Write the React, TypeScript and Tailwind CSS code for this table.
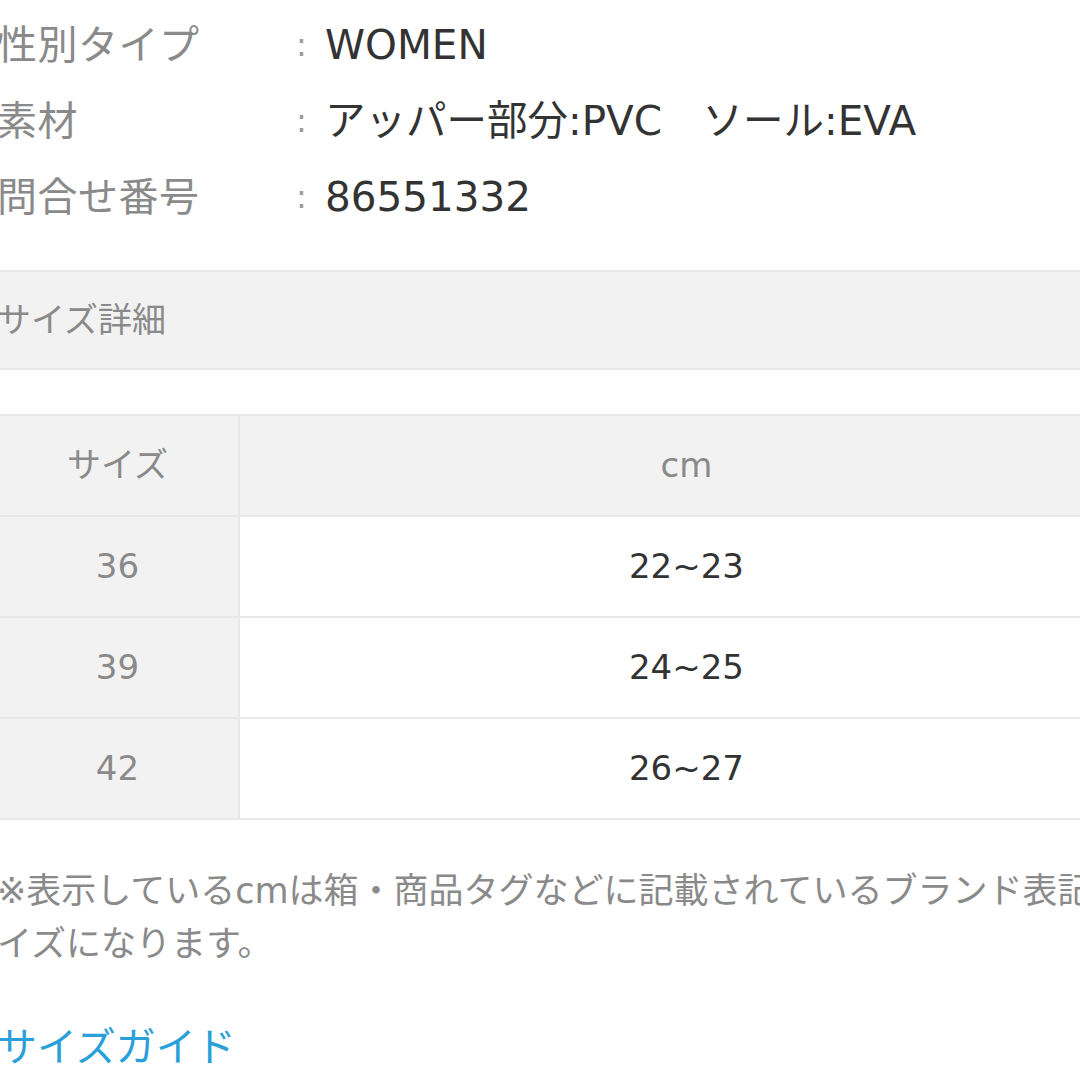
const font = { fontFamily: '"DejaVu Sans", "Noto Sans CJK JP", sans-serif' };

const specs = [
  { label: "性別タイプ", value: "WOMEN" },
  { label: "素材", value: "アッパー部分:PVC\u3000ソール:EVA" },
  { label: "問合せ番号", value: "86551332" },
];

const sizes = [
  { size: "36", cm: "22~23" },
  { size: "39", cm: "24~25" },
  { size: "42", cm: "26~27" },
];

export default function App() {
  return (
    <div className="w-[1080px] h-[1080px] overflow-hidden bg-white" style={font}>
      <div className="w-[1136px] ml-[-3px]">
        {/* Spec list */}
        <div className="pt-[7px]">
          {specs.map((s) => (
            <div key={s.label} className="flex items-center h-[76px] text-[40px]">
              <div className="w-[299px] text-[#8a8a8a] tracking-[0.5px]">{s.label}</div>
              <div className="w-[29px] text-[#9a9a9a] text-[32px]">:</div>
              <div className="text-[#333333] text-[40.5px] whitespace-pre">{s.value}</div>
            </div>
          ))}
        </div>

        {/* Section header */}
        <div className="mt-[35px] h-[100px] bg-[#f2f2f2] border-y-2 border-[#e8e8e8] flex items-center text-[34px] text-[#8a8a8a]">
          サイズ詳細
        </div>

        {/* Size table */}
        <div className="mt-[44px] border-t-2 border-[#e8e8e8] text-[34px]">
          <div className="flex h-[101px] border-b-2 border-[#e8e8e8] bg-[#f2f2f2] text-[#8a8a8a]">
            <div className="w-[243px] flex items-center justify-center border-r-2 border-[#e8e8e8]">サイズ</div>
            <div className="flex-1 flex items-center justify-center">cm</div>
          </div>
          {sizes.map((r) => (
            <div key={r.size} className="flex h-[101px] border-b-2 border-[#e8e8e8]">
              <div className="w-[243px] flex items-center justify-center bg-[#f2f2f2] border-r-2 border-[#e8e8e8] text-[#8a8a8a]">
                {r.size}
              </div>
              <div className="flex-1 flex items-center justify-center text-[#333333]">{r.cm}</div>
            </div>
          ))}
        </div>

        {/* Note */}
        <p className="mt-[45px] w-[1180px] text-[35px] leading-[53px] text-[#8a8a8a]">
          ※表示しているcmは箱・商品タグなどに記載されているブランド表記のサイズになります。
        </p>

        <div className="mt-[52px] text-[40px] leading-[48px] text-[#2a9fd8]">サイズガイド</div>
      </div>
    </div>
  );
}
